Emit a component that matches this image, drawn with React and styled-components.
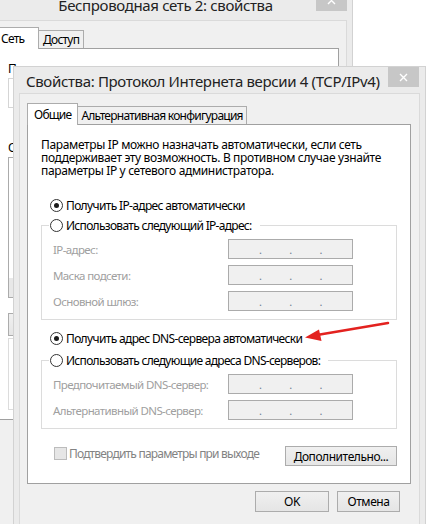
import styled, { createGlobalStyle } from "styled-components";

const GlobalStyle = createGlobalStyle`
  html, body {
    margin: 0;
    padding: 0;
    background: #ffffff;
  }
  body {
    font-family: "Noto Sans", "Open Sans", sans-serif;
    font-size: 12px;
    letter-spacing: -0.45px;
    color: #000000;
  }
`;

const Desktop = styled.div`
  position: relative;
  width: 443px;
  height: 524px;
  overflow: hidden;
  background: #ffffff;
`;

// windows sit on the desktop at their own coordinates
const Window = styled.div`
  position: absolute;
  left: ${p => p.$left}px;
  top: ${p => p.$top}px;
  width: ${p => p.$width}px;
  height: ${p => p.$height}px;
  box-sizing: border-box;
  display: flex;
  flex-direction: column;
  padding: 0 5px;
  background: #ebebeb;
  border: 1px solid #d2d2d2;
`;

const TitleBar = styled.div`
  display: grid;
  grid-template-columns: ${p => (p.$center ? "1fr auto 1fr" : "1fr auto")};
  align-items: center;
  height: ${p => p.$height}px;
  flex-shrink: 0;
`;

const Title = styled.div`
  grid-column: ${p => (p.$center ? "2" : "1")};
  padding-left: ${p => (p.$center ? 0 : 7)}px;
  padding-top: ${p => p.$shift || 0}px;
  font-size: 15px;
  letter-spacing: -0.35px;
  color: #222222;
  white-space: nowrap;
`;

const CloseButton = styled.div`
  justify-self: end;
  align-self: start;
  display: flex;
  align-items: center;
  justify-content: center;
  width: 31px;
  height: ${p => p.$height || 20}px;
  margin-right: ${p => p.$right || 0}px;
  background: #c7c7c7;
`;

const Body = styled.div`
  flex: 1;
  display: flex;
  flex-direction: column;
  align-items: flex-start;
  background: #f0f0f0;
  border: 1px solid #dadada;
  padding: ${p => p.$pad};
`;

const TabStrip = styled.div`
  position: relative;
  z-index: 1;
  display: flex;
  align-items: flex-end;
  margin-bottom: -1px;
`;

const Tab = styled.div`
  box-sizing: border-box;
  flex-shrink: 0;
  min-width: ${p => p.$width}px;
  height: ${p => (p.$active ? 22 : 18)}px;
  margin-bottom: ${p => (p.$active ? 0 : 1)}px;
  margin-left: ${p => (p.$active ? 0 : -1)}px;
  padding: 0 ${p => p.$pad}px;
  display: flex;
  align-items: center;
  background: ${p => (p.$active ? "#ffffff" : "#f0f0f0")};
  border: 1px solid #acacac;
  border-bottom: none;
  white-space: nowrap;
  letter-spacing: -0.75px;
`;

const Panel = styled.div`
  box-sizing: border-box;
  width: ${p => p.$width}px;
  height: ${p => p.$height}px;
  padding: ${p => p.$pad};
  display: flex;
  flex-direction: column;
  background: #ffffff;
  border: 1px solid #a0a0a0;
`;

const Description = styled.div`
  line-height: 13px;
  white-space: nowrap;
  letter-spacing: -0.35px;
`;

const Label = styled.div`
  line-height: 15px;
  margin-top: ${p => p.$top || 0}px;
  white-space: nowrap;
  color: ${p => (p.$disabled ? "#a0a0a0" : "#000000")};
  font-size: ${p => (p.$disabled ? 11.5 : 12)}px;
  letter-spacing: ${p => (p.$disabled ? -0.6 : -0.45)}px;
`;

const Radio = styled.span`
  position: relative;
  box-sizing: border-box;
  width: 13px;
  height: 13px;
  flex-shrink: 0;
  border-radius: 50%;
  border: 1px solid #333333;
  background: #ffffff;

  &::after {
    content: "";
    display: ${p => (p.$checked ? "block" : "none")};
    position: absolute;
    left: 3px;
    top: 3px;
    width: 5px;
    height: 5px;
    border-radius: 50%;
    background: #1b1b1b;
  }
`;

const RadioRow = styled.label`
  display: flex;
  align-items: center;
  gap: 3px;
  height: 15px;
  margin: ${p => p.$top || 0}px 0 0 9px;
  white-space: nowrap;
  letter-spacing: -0.65px;
`;

const Group = styled.fieldset`
  margin: ${p => p.$top}px 0 0 0;
  padding: 0;
  min-width: 0;
  border: 1px solid #dcdcdc;
`;

const Legend = styled.legend`
  margin-left: 7px;
  padding: 0 8px 0 1px;
  display: flex;
  align-items: center;
  gap: 3px;
  height: 15px;
  white-space: nowrap;
  letter-spacing: -0.7px;
`;

const FieldGrid = styled.div`
  display: grid;
  grid-template-columns: 175px 125px;
  grid-auto-rows: 20px;
  row-gap: 6px;
  align-items: center;
  padding: 6px 0 8px 11px;
`;

const IpBox = styled.div`
  box-sizing: border-box;
  height: 20px;
  display: flex;
  justify-content: space-between;
  align-items: flex-end;
  padding: 0 30px 3px;
  background: #f0f0f0;
  border: 1px solid #ababab;
  color: #6f7f90;
  font-size: 11px;
  line-height: 11px;
`;

const BottomRow = styled.div`
  display: flex;
  justify-content: space-between;
  align-items: flex-start;
  margin-top: 17px;
`;

const CheckRow = styled.label`
  display: flex;
  align-items: center;
  gap: 2px;
  height: 15px;
  margin: 0 0 0 13px;
  color: #838383;
  white-space: nowrap;
  letter-spacing: -0.8px;
`;

const Checkbox = styled.span`
  box-sizing: border-box;
  width: 13px;
  height: 13px;
  background: #e6e6e6;
  border: 1px solid #bcbcbc;
`;

const Button = styled.div`
  box-sizing: border-box;
  width: ${p => p.$width}px;
  height: ${p => p.$height || 21}px;
  display: flex;
  align-items: center;
  justify-content: center;
  background: linear-gradient(#f0f0f0, #e5e5e5);
  border: 1px solid #acacac;
  white-space: nowrap;
`;

const ButtonRow = styled.div`
  align-self: stretch;
  display: flex;
  justify-content: flex-end;
  gap: 8px;
  margin-top: 7px;
  padding-right: 10px;
`;

const InputLine = styled.div`
  box-sizing: border-box;
  width: 320px;
  height: 30px;
  margin-top: 2px;
  background: #ffffff;
  border: 1px solid #d5d5d5;
`;

const ListBox = styled.div`
  box-sizing: border-box;
  width: 320px;
  height: 141px;
  margin-top: 2px;
  display: flex;
  flex-direction: column;
  justify-content: flex-end;
  background: #ffffff;
  border: 1px solid #ababab;
`;

const ScrollBar = styled.div`
  height: 19px;
  background: #e8e8e8;
`;

const SmallButtons = styled.div`
  display: flex;
  gap: 8px;
  margin-top: 15px;
`;

const InfoBox = styled.div`
  box-sizing: border-box;
  width: 320px;
  height: 72px;
  margin-top: 2px;
  border: 1px solid #dcdcdc;
`;

const ArrowSvg = styled.svg`
  position: absolute;
  left: 298px;
  top: 314px;
`;

function CloseIcon() {
  return (
    <svg width="9" height="9" viewBox="0 0 9 9">
      <path d="M1 1L8 8M8 1L1 8" stroke="#ffffff" strokeWidth="1.4" />
    </svg>
  );
}

function IpField() {
  return (
    <IpBox>
      <span>.</span>
      <span>.</span>
      <span>.</span>
    </IpBox>
  );
}

function BackWindow() {
  return (
    <Window $left={-22} $top={-12} $width={375} $height={600}>
      <TitleBar $center $height={31}>
        <Title $center $shift={1}>Беспроводная сеть 2: свойства</Title>
        <CloseButton $height={22} $right={0}>
          <CloseIcon />
        </CloseButton>
      </TitleBar>
      <Body $pad="6px 8px 0 9px">
        <TabStrip>
          <Tab $active $width={45} $pad={6}>Сеть</Tab>
          <Tab $width={46} $pad={4}>Доступ</Tab>
        </TabStrip>
        <Panel $width={345} $height={372} $pad="12px 13px 0 13px">
          <Label>Подключение через:</Label>
          <InputLine />
          <Label $top={32}>Отмеченные компоненты используются этим подключением:</Label>
          <ListBox>
            <ScrollBar />
          </ListBox>
          <SmallButtons>
            <Button $width={100} $height={23}>Установить...</Button>
            <Button $width={100} $height={23}>Удалить</Button>
          </SmallButtons>
          <InfoBox />
        </Panel>
      </Body>
    </Window>
  );
}

function FrontWindow() {
  return (
    <Window $left={13} $top={66} $width={413} $height={462}>
      <TitleBar $height={26}>
        <Title $shift={2}>Свойства: Протокол Интернета версии 4 (TCP/IPv4)</Title>
        <CloseButton $right={1}>
          <CloseIcon />
        </CloseButton>
      </TitleBar>
      <Body $pad="9px 9px 0 7px">
        <TabStrip>
          <Tab $active $width={51} $pad={6}>Общие</Tab>
          <Tab $width={169} $pad={3}>Альтернативная конфигурация</Tab>
        </TabStrip>
        <Panel $width={384} $height={360} $pad="13px 13px 0 13px">
          <Description>
            Параметры IP можно назначать автоматически, если сеть
            <br />
            поддерживает эту возможность. В противном случае узнайте
            <br />
            параметры IP у сетевого администратора.
          </Description>

          <RadioRow $top={21}>
            <Radio $checked />
            Получить IP-адрес автоматически
          </RadioRow>

          <Group $top={5}>
            <Legend>
              <Radio />
              Использовать следующий IP-адрес:
            </Legend>
            <FieldGrid>
              <Label $disabled>IP-адрес:</Label>
              <IpField />
              <Label $disabled>Маска подсети:</Label>
              <IpField />
              <Label $disabled>Основной шлюз:</Label>
              <IpField />
            </FieldGrid>
          </Group>

          <RadioRow $top={11}>
            <Radio $checked />
            Получить адрес DNS-сервера автоматически
          </RadioRow>

          <Group $top={7}>
            <Legend>
              <Radio />
              Использовать следующие адреса DNS-серверов:
            </Legend>
            <FieldGrid>
              <Label $disabled>Предпочитаемый DNS-сервер:</Label>
              <IpField />
              <Label $disabled>Альтернативный DNS-сервер:</Label>
              <IpField />
            </FieldGrid>
          </Group>

          <BottomRow>
            <CheckRow>
              <Checkbox />
              Подтвердить параметры при выходе
            </CheckRow>
            <Button $width={112} $height={20}>Дополнительно...</Button>
          </BottomRow>
        </Panel>
        <ButtonRow>
          <Button $width={74}>OK</Button>
          <Button $width={63}>Отмена</Button>
        </ButtonRow>
      </Body>
    </Window>
  );
}

export default function App() {
  return (
    <Desktop>
      <GlobalStyle />
      <BackWindow />
      <FrontWindow />
      <ArrowSvg width="96" height="30" viewBox="0 0 96 30">
        <path d="M90 9L19 21" stroke="#e3221f" strokeWidth="2.6" strokeLinecap="round" />
        <path d="M7 23.5L21 15.5L23.5 27Z" fill="#e3221f" />
      </ArrowSvg>
    </Desktop>
  );
}
